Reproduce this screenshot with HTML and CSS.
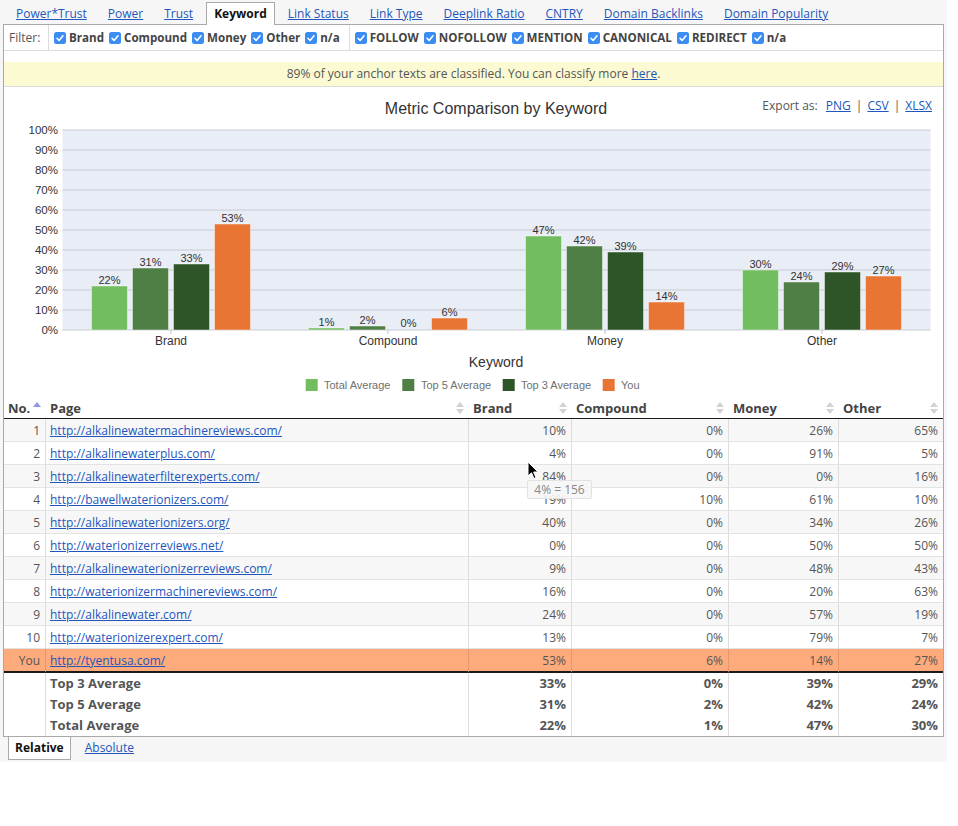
FILE: index.html
```html
<!DOCTYPE html>
<html>
<head>
<meta charset="utf-8">
<title>Metric Comparison by Keyword</title>
<link rel="stylesheet" href="styles.css">
</head>
<body>
<div class="wrap">
  <nav class="tabs">
    <a class="tab" href="#">Power*Trust</a>
    <a class="tab" href="#">Power</a>
    <a class="tab" href="#">Trust</a>
    <span class="tab active">Keyword</span>
    <a class="tab" href="#">Link Status</a>
    <a class="tab" href="#">Link Type</a>
    <a class="tab" href="#">Deeplink Ratio</a>
    <a class="tab" href="#">CNTRY</a>
    <a class="tab" href="#">Domain Backlinks</a>
    <a class="tab" href="#">Domain Popularity</a>
  </nav>

  <div class="panel">
    <div class="filter">
      <div class="flabel">Filter:</div>
      <div class="fgroup">
        <span class="fitem"><svg class="cb" viewBox="0 0 12 12"><rect width="12" height="12" rx="2.5" fill="#3b8cf3"/><path d="M3 6.3 5.1 8.5 9 3.8" stroke="#fff" stroke-width="1.6" fill="none" stroke-linecap="round" stroke-linejoin="round"/></svg>Brand</span>
        <span class="fitem"><svg class="cb" viewBox="0 0 12 12"><rect width="12" height="12" rx="2.5" fill="#3b8cf3"/><path d="M3 6.3 5.1 8.5 9 3.8" stroke="#fff" stroke-width="1.6" fill="none" stroke-linecap="round" stroke-linejoin="round"/></svg>Compound</span>
        <span class="fitem"><svg class="cb" viewBox="0 0 12 12"><rect width="12" height="12" rx="2.5" fill="#3b8cf3"/><path d="M3 6.3 5.1 8.5 9 3.8" stroke="#fff" stroke-width="1.6" fill="none" stroke-linecap="round" stroke-linejoin="round"/></svg>Money</span>
        <span class="fitem"><svg class="cb" viewBox="0 0 12 12"><rect width="12" height="12" rx="2.5" fill="#3b8cf3"/><path d="M3 6.3 5.1 8.5 9 3.8" stroke="#fff" stroke-width="1.6" fill="none" stroke-linecap="round" stroke-linejoin="round"/></svg>Other</span>
        <span class="fitem"><svg class="cb" viewBox="0 0 12 12"><rect width="12" height="12" rx="2.5" fill="#3b8cf3"/><path d="M3 6.3 5.1 8.5 9 3.8" stroke="#fff" stroke-width="1.6" fill="none" stroke-linecap="round" stroke-linejoin="round"/></svg>n/a</span>
      </div>
      <div class="fgroup last">
        <span class="fitem"><svg class="cb" viewBox="0 0 12 12"><rect width="12" height="12" rx="2.5" fill="#3b8cf3"/><path d="M3 6.3 5.1 8.5 9 3.8" stroke="#fff" stroke-width="1.6" fill="none" stroke-linecap="round" stroke-linejoin="round"/></svg>FOLLOW</span>
        <span class="fitem"><svg class="cb" viewBox="0 0 12 12"><rect width="12" height="12" rx="2.5" fill="#3b8cf3"/><path d="M3 6.3 5.1 8.5 9 3.8" stroke="#fff" stroke-width="1.6" fill="none" stroke-linecap="round" stroke-linejoin="round"/></svg>NOFOLLOW</span>
        <span class="fitem"><svg class="cb" viewBox="0 0 12 12"><rect width="12" height="12" rx="2.5" fill="#3b8cf3"/><path d="M3 6.3 5.1 8.5 9 3.8" stroke="#fff" stroke-width="1.6" fill="none" stroke-linecap="round" stroke-linejoin="round"/></svg>MENTION</span>
        <span class="fitem"><svg class="cb" viewBox="0 0 12 12"><rect width="12" height="12" rx="2.5" fill="#3b8cf3"/><path d="M3 6.3 5.1 8.5 9 3.8" stroke="#fff" stroke-width="1.6" fill="none" stroke-linecap="round" stroke-linejoin="round"/></svg>CANONICAL</span>
        <span class="fitem"><svg class="cb" viewBox="0 0 12 12"><rect width="12" height="12" rx="2.5" fill="#3b8cf3"/><path d="M3 6.3 5.1 8.5 9 3.8" stroke="#fff" stroke-width="1.6" fill="none" stroke-linecap="round" stroke-linejoin="round"/></svg>REDIRECT</span>
        <span class="fitem"><svg class="cb" viewBox="0 0 12 12"><rect width="12" height="12" rx="2.5" fill="#3b8cf3"/><path d="M3 6.3 5.1 8.5 9 3.8" stroke="#fff" stroke-width="1.6" fill="none" stroke-linecap="round" stroke-linejoin="round"/></svg>n/a</span>
      </div>
    </div>

    <div class="notice">89% of your anchor texts are classified. You can classify more <a href="#">here</a>.</div>

    <div class="chart">
      <svg class="chart-svg" width="939" height="310" viewBox="0 0 939 310">
        <text class="ctitle" x="492" y="27" text-anchor="middle">Metric Comparison by Keyword</text>
        <rect x="58.5" y="43" width="868" height="200" fill="#e9edf5"/>
        <g stroke="#c7cbd3" stroke-width="1.2">
          <line x1="58.5" x2="926.5" y1="43" y2="43"/>
          <line x1="58.5" x2="926.5" y1="63" y2="63"/>
          <line x1="58.5" x2="926.5" y1="83" y2="83"/>
          <line x1="58.5" x2="926.5" y1="103" y2="103"/>
          <line x1="58.5" x2="926.5" y1="123" y2="123"/>
          <line x1="58.5" x2="926.5" y1="143" y2="143"/>
          <line x1="58.5" x2="926.5" y1="163" y2="163"/>
          <line x1="58.5" x2="926.5" y1="183" y2="183"/>
          <line x1="58.5" x2="926.5" y1="203" y2="203"/>
          <line x1="58.5" x2="926.5" y1="223" y2="223"/>
          <line x1="58.5" x2="926.5" y1="243" y2="243"/>
          <line x1="167" x2="167" y1="243" y2="247"/>
          <line x1="384" x2="384" y1="243" y2="247"/>
          <line x1="601" x2="601" y1="243" y2="247"/>
          <line x1="818" x2="818" y1="243" y2="247"/>
        </g>
        <g class="ylab" text-anchor="end">
          <text x="54" y="47">100%</text>
          <text x="54" y="67">90%</text>
          <text x="54" y="87">80%</text>
          <text x="54" y="107">70%</text>
          <text x="54" y="127">60%</text>
          <text x="54" y="147">50%</text>
          <text x="54" y="167">40%</text>
          <text x="54" y="187">30%</text>
          <text x="54" y="207">20%</text>
          <text x="54" y="227">10%</text>
          <text x="54" y="247">0%</text>
        </g>
        <g stroke="#ffffff" stroke-opacity="0.45" stroke-width="1">
          <rect x="87.5" y="199" width="36" height="44" fill="#72bd5f"/>
          <rect x="128.5" y="181" width="36" height="62" fill="#4f7f45"/>
          <rect x="169.5" y="177" width="36" height="66" fill="#2e5527"/>
          <rect x="210.5" y="137" width="36" height="106" fill="#e97535"/>
          <rect x="304.5" y="241" width="36" height="2" fill="#72bd5f"/>
          <rect x="345.5" y="239" width="36" height="4" fill="#4f7f45"/>
          <rect x="427.5" y="231" width="36" height="12" fill="#e97535"/>
          <rect x="521.5" y="149" width="36" height="94" fill="#72bd5f"/>
          <rect x="562.5" y="159" width="36" height="84" fill="#4f7f45"/>
          <rect x="603.5" y="165" width="36" height="78" fill="#2e5527"/>
          <rect x="644.5" y="215" width="36" height="28" fill="#e97535"/>
          <rect x="738.5" y="183" width="36" height="60" fill="#72bd5f"/>
          <rect x="779.5" y="195" width="36" height="48" fill="#4f7f45"/>
          <rect x="820.5" y="185" width="36" height="58" fill="#2e5527"/>
          <rect x="861.5" y="189" width="36" height="54" fill="#e97535"/>
        </g>
        <g class="blab" text-anchor="middle">
          <text x="105.5" y="197">22%</text>
          <text x="146.5" y="179">31%</text>
          <text x="187.5" y="175">33%</text>
          <text x="228.5" y="135">53%</text>
          <text x="322.5" y="239">1%</text>
          <text x="363.5" y="237">2%</text>
          <text x="404.5" y="240">0%</text>
          <text x="445.5" y="229">6%</text>
          <text x="539.5" y="147">47%</text>
          <text x="580.5" y="157">42%</text>
          <text x="621.5" y="163">39%</text>
          <text x="662.5" y="213">14%</text>
          <text x="756.5" y="181">30%</text>
          <text x="797.5" y="193">24%</text>
          <text x="838.5" y="183">29%</text>
          <text x="879.5" y="187">27%</text>
        </g>
        <g class="xlab" text-anchor="middle">
          <text x="167" y="257.5">Brand</text>
          <text x="384" y="257.5">Compound</text>
          <text x="601" y="257.5">Money</text>
          <text x="818" y="257.5">Other</text>
        </g>
        <text class="xtitle" x="492" y="280" text-anchor="middle">Keyword</text>
        <g class="legend">
          <rect x="301.7" y="292" width="12" height="12" fill="#72bd5f"/>
          <text x="320" y="302">Total Average</text>
          <rect x="398.3" y="292" width="12" height="12" fill="#4f7f45"/>
          <text x="417" y="302">Top 5 Average</text>
          <rect x="498.7" y="292" width="12" height="12" fill="#2e5527"/>
          <text x="517" y="302">Top 3 Average</text>
          <rect x="598.7" y="292" width="12" height="12" fill="#e97535"/>
          <text x="617" y="302">You</text>
        </g>
      </svg>
      <div class="export">Export as: <a href="#">PNG</a><span class="sep">|</span><a href="#">CSV</a><span class="sep">|</span><a href="#">XLSX</a></div>
    </div>

    <table class="data">
      <colgroup>
        <col class="c-no"><col class="c-page"><col class="c-brand"><col class="c-comp"><col class="c-money"><col class="c-other">
      </colgroup>
      <thead>
        <tr>
          <th><span class="th-in">No.<svg class="sort" viewBox="0 0 8 12"><path d="M0 5 4 0 8 5Z" fill="#8a97ea"/></svg></span></th>
          <th><span class="th-in">Page<svg class="sort" viewBox="0 0 8 12"><path d="M0 5 4 0 8 5Z M0 7 8 7 4 12Z" fill="#d2d2d2"/></svg></span></th>
          <th><span class="th-in">Brand<svg class="sort" viewBox="0 0 8 12"><path d="M0 5 4 0 8 5Z M0 7 8 7 4 12Z" fill="#d2d2d2"/></svg></span></th>
          <th><span class="th-in">Compound<svg class="sort" viewBox="0 0 8 12"><path d="M0 5 4 0 8 5Z M0 7 8 7 4 12Z" fill="#d2d2d2"/></svg></span></th>
          <th><span class="th-in">Money<svg class="sort" viewBox="0 0 8 12"><path d="M0 5 4 0 8 5Z M0 7 8 7 4 12Z" fill="#d2d2d2"/></svg></span></th>
          <th><span class="th-in">Other<svg class="sort" viewBox="0 0 8 12"><path d="M0 5 4 0 8 5Z M0 7 8 7 4 12Z" fill="#d2d2d2"/></svg></span></th>
        </tr>
      </thead>
      <tbody>
        <tr class="odd"><td class="num">1</td><td><a href="#">http://alkalinewatermachinereviews.com/</a></td><td class="num">10%</td><td class="num">0%</td><td class="num">26%</td><td class="num">65%</td></tr>
        <tr><td class="num">2</td><td><a href="#">http://alkalinewaterplus.com/</a></td><td class="num">4%</td><td class="num">0%</td><td class="num">91%</td><td class="num">5%</td></tr>
        <tr class="odd"><td class="num">3</td><td><a href="#">http://alkalinewaterfilterexperts.com/</a></td><td class="num">84%</td><td class="num">0%</td><td class="num">0%</td><td class="num">16%</td></tr>
        <tr><td class="num">4</td><td><a href="#">http://bawellwaterionizers.com/</a></td><td class="num">19%</td><td class="num">10%</td><td class="num">61%</td><td class="num">10%</td></tr>
        <tr class="odd"><td class="num">5</td><td><a href="#">http://alkalinewaterionizers.org/</a></td><td class="num">40%</td><td class="num">0%</td><td class="num">34%</td><td class="num">26%</td></tr>
        <tr><td class="num">6</td><td><a href="#">http://waterionizerreviews.net/</a></td><td class="num">0%</td><td class="num">0%</td><td class="num">50%</td><td class="num">50%</td></tr>
        <tr class="odd"><td class="num">7</td><td><a href="#">http://alkalinewaterionizerreviews.com/</a></td><td class="num">9%</td><td class="num">0%</td><td class="num">48%</td><td class="num">43%</td></tr>
        <tr><td class="num">8</td><td><a href="#">http://waterionizermachinereviews.com/</a></td><td class="num">16%</td><td class="num">0%</td><td class="num">20%</td><td class="num">63%</td></tr>
        <tr class="odd"><td class="num">9</td><td><a href="#">http://alkalinewater.com/</a></td><td class="num">24%</td><td class="num">0%</td><td class="num">57%</td><td class="num">19%</td></tr>
        <tr><td class="num">10</td><td><a href="#">http://waterionizerexpert.com/</a></td><td class="num">13%</td><td class="num">0%</td><td class="num">79%</td><td class="num">7%</td></tr>
        <tr class="you"><td class="num">You</td><td><a href="#">http://tyentusa.com/</a></td><td class="num">53%</td><td class="num">6%</td><td class="num">14%</td><td class="num">27%</td></tr>
      </tbody>
      <tfoot>
        <tr><td></td><td>Top 3 Average</td><td class="num">33%</td><td class="num">0%</td><td class="num">39%</td><td class="num">29%</td></tr>
        <tr><td></td><td>Top 5 Average</td><td class="num">31%</td><td class="num">2%</td><td class="num">42%</td><td class="num">24%</td></tr>
        <tr><td></td><td>Total Average</td><td class="num">22%</td><td class="num">1%</td><td class="num">47%</td><td class="num">30%</td></tr>
      </tfoot>
    </table>

    <div class="tooltip">4% = 156</div>
    <svg class="cursor" width="12" height="19" viewBox="0 0 12 19"><path d="M1 1 1 15 4.5 11.8 7 17.5 9 16.6 6.6 11 11 11Z" fill="#000" stroke="#fff" stroke-width="1"/></svg>
  </div>

  <nav class="subtabs">
    <span class="subtab active">Relative</span>
    <a class="subtab" href="#">Absolute</a>
  </nav>
</div>
</body>
</html>
```

FILE: styles.css
```css
body {
  margin: 0;
  background: #ffffff;
  font-family: "Open Sans", "DejaVu Sans", sans-serif;
  color: #555;
}

a {
  color: #2356bd;
  text-decoration: underline;
}

.wrap {
  width: 947px;
  background: #f6f6f6;
  padding-bottom: 2px;
}

/* top tabs */
.tabs {
  display: flex;
  gap: 5px;
  padding: 2px 0 0 8px;
  height: 22px;
  font-size: 12px;
}

.tab {
  display: block;
  padding: 0 7px;
  line-height: 21px;
  border: 1px solid transparent;
  border-bottom: 0;
}

.tab.active {
  position: relative;
  z-index: 1;
  background: #fff;
  border-color: #a9a9a9;
  color: #111;
  font-weight: 700;
  padding-bottom: 1px;
  margin-bottom: -1px;
}

/* main panel */
.panel {
  position: relative;
  margin-left: 3px;
  width: 939px;
  border: 1px solid #a9a9a9;
  background: #fff;
}

.filter {
  display: flex;
  height: 25px;
  border-bottom: 1px solid #dcdcdc;
  font-size: 11.6px;
}

.flabel {
  width: 39px;
  padding-left: 5px;
  line-height: 25px;
  font-size: 12px;
  color: #555;
  border-right: 1px solid #dcdcdc;
}

.fgroup {
  display: flex;
  align-items: center;
  padding: 0 4px 0 5px;
  border-right: 1px solid #dcdcdc;
}

.fgroup.last {
  border-right: 0;
}

.fitem {
  display: flex;
  align-items: center;
  margin-right: 5px;
  font-weight: 700;
  color: #444;
}

.cb {
  width: 12px;
  height: 12px;
  margin-right: 3px;
  flex: none;
}

.notice {
  margin-top: 11px;
  height: 24px;
  line-height: 24px;
  background: #fbfad2;
  border-bottom: 1px solid #dcdcdc;
  text-align: center;
  font-size: 12px;
  color: #555;
}

/* chart */
.chart {
  display: grid;
}

.chart > * {
  grid-area: 1 / 1;
}

.chart-svg {
  display: block;
  font-family: "Liberation Sans", Arial, sans-serif;
}

.ctitle {
  font-size: 16px;
  fill: #333;
}

.ylab text {
  font-size: 11.5px;
  fill: #333;
}

.blab text {
  font-size: 11px;
  fill: #333;
}

.xlab text {
  font-size: 12px;
  fill: #333;
}

.xtitle {
  font-size: 14px;
  fill: #333;
}

.legend text {
  font-size: 11px;
  fill: #707070;
}

.export {
  justify-self: end;
  align-self: start;
  margin: 10px 11px 0 0;
  font-size: 12px;
  color: #555;
}

.export a {
  margin-left: 5px;
}

.export .sep {
  margin-left: 5px;
}

/* table */
.data {
  width: 939px;
  table-layout: fixed;
  border-collapse: separate;
  border-spacing: 0;
  font-size: 12px;
}

.c-no { width: 42px; }
.c-page { width: 423px; }
.c-brand { width: 103px; }
.c-comp { width: 157px; }
.c-money { width: 110px; }
.c-other { width: 104px; }

.data th {
  height: 21px;
  padding: 0 4px;
  text-align: left;
  font-size: 13px;
  font-weight: 700;
  color: #444;
  border-bottom: 1px solid #1a1a1a;
}

.th-in {
  display: flex;
  align-items: center;
  justify-content: space-between;
}

.sort {
  width: 8px;
  height: 12px;
  margin-right: 1px;
  flex: none;
}

.data td {
  height: 22px;
  padding: 0 4px;
  white-space: nowrap;
  overflow: hidden;
  color: #555;
  border-bottom: 1px solid #e3e3e3;
  border-right: 1px solid #dddddd;
}

.data td:last-child {
  border-right: 0;
}

.data td.num {
  text-align: right;
  padding-right: 5px;
}

.data tbody tr.odd td {
  background: #f7f7f7;
}

.data tr.you td {
  background: #fdaa7c;
  border-right-color: #e5976c;
  border-bottom: 2px solid #1a1a1a;
}

.data tr.you td:last-child {
  border-right: 0;
}

.data tfoot td {
  height: 19px;
  padding-bottom: 2px;
  border-bottom: 0;
  font-weight: 700;
  font-size: 13px;
  color: #555;
}

.tooltip {
  position: absolute;
  left: 523px;
  top: 455px;
  width: 63px;
  height: 17px;
  line-height: 17px;
  text-align: center;
  font-size: 12px;
  color: #888;
  background: rgba(246, 246, 246, 0.9);
  border: 1px solid #e2e2e2;
  border-radius: 2px;
}

.cursor {
  position: absolute;
  left: 523px;
  top: 436px;
}

/* bottom tabs */
.subtabs {
  display: flex;
  gap: 7px;
  padding-left: 5px;
  height: 23px;
  font-size: 12px;
}

.subtab {
  display: block;
  padding: 0 6px;
  line-height: 22px;
  border: 1px solid transparent;
  border-top: 0;
}

.subtab:first-child {
  margin-left: 3px;
}

.subtab.active {
  background: #fff;
  border-color: #a9a9a9;
  font-weight: 700;
  color: #111;
}
```
